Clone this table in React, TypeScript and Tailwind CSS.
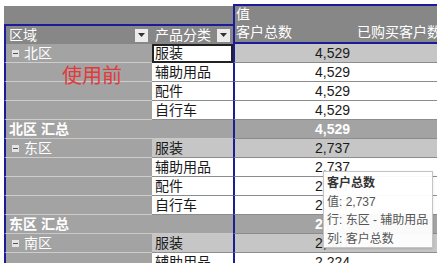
import React from 'react';

const BLUE = 'border-[#1c1c98]';

type RowKind = 'first' | 'sub' | 'total';

interface RowData {
  kind: RowKind;
  region?: string;
  product?: string;
  value: string;
  active?: boolean;
}

const rows: RowData[] = [
  { kind: 'first', region: '北区', product: '服装', value: '4,529', active: true },
  { kind: 'sub', product: '辅助用品', value: '4,529' },
  { kind: 'sub', product: '配件', value: '4,529' },
  { kind: 'sub', product: '自行车', value: '4,529' },
  { kind: 'total', region: '北区 汇总', value: '4,529' },
  { kind: 'first', region: '东区', product: '服装', value: '2,737' },
  { kind: 'sub', product: '辅助用品', value: '2,737' },
  { kind: 'sub', product: '配件', value: '2,737' },
  { kind: 'sub', product: '自行车', value: '2,737' },
  { kind: 'total', region: '东区 汇总', value: '2,737' },
  { kind: 'first', region: '南区', product: '服装', value: '2,331' },
  { kind: 'sub', product: '辅助用品', value: '2,224' },
];

const DropButton: React.FC = () => (
  <span className="w-[13px] h-[13px] bg-[#ececec] flex items-center justify-center">
    <svg width="7" height="4" viewBox="0 0 7 4">
      <path d="M0 0h7L3.5 4z" fill="#333" />
    </svg>
  </span>
);

const Collapse: React.FC = () => (
  <span className="w-[7px] h-[7px] bg-[#e4e4e4] flex items-center justify-center mr-[5px]">
    <span className="w-[5px] h-px bg-[#555]" />
  </span>
);

const PivotRow: React.FC<{ row: RowData }> = ({ row }) => {
  if (row.kind === 'total') {
    return (
      <div className="flex h-[19px] bg-[#a3a3a3] text-white font-bold">
        <div className={`w-[229px] border-l-2 ${BLUE} border-b border-b-[#c9c9c9] pl-[3px] leading-[18px]`}>
          {row.region}
        </div>
        <div className={`w-[119px] border-l-2 ${BLUE} border-b border-b-[#8c8c8c] text-right pr-[2px] leading-[18px]`}>
          {row.value}
        </div>
        <div className="flex-1 border-b border-[#8c8c8c]" />
      </div>
    );
  }
  const light = row.kind === 'first' && !row.active;
  const fill = row.kind === 'first' ? 'bg-[#c6c6c6]' : 'bg-white';
  return (
    <div className="flex h-[19px] text-[#1a1a1a]">
      <div className={`w-[148px] border-l-2 ${BLUE} border-b border-b-[#cdcdcd] bg-[#a3a3a3] text-white flex items-center pl-[6px]`}>
        {row.region && (
          <>
            <Collapse />
            <span className="leading-[18px]">{row.region}</span>
          </>
        )}
      </div>
      {row.active ? (
        <div className="w-[81px] border-2 border-[#222] bg-white pl-[1px] leading-[15px]">{row.product}</div>
      ) : (
        <div className={`w-[81px] border-b border-[#8c8c8c] pl-[3px] leading-[18px] ${light ? 'bg-[#c6c6c6]' : 'bg-white'}`}>
          {row.product}
        </div>
      )}
      <div className={`w-[119px] border-l-2 ${BLUE} border-b border-b-[#8c8c8c] text-right pr-[2px] leading-[18px] ${fill}`}>
        {row.value}
      </div>
      <div className={`flex-1 border-b border-[#8c8c8c] ${fill}`} />
    </div>
  );
};

export default function App() {
  return (
    <div className="relative w-[437px] h-[263px] overflow-hidden bg-white pl-[4px] pt-[4px] text-[14px] font-[Liberation_Sans,Noto_Sans_CJK_SC,sans-serif]">
      {/* header: 值 */}
      <div className="flex h-[20px]">
        <div className="w-[229px] mt-[2px] bg-[#878787]" />
        <div className={`flex-1 border-t-2 border-l-2 ${BLUE} bg-[#878787] text-white pl-[1px] leading-[17px]`}>值</div>
      </div>
      {/* header: field names */}
      <div className="flex h-[20px] text-white">
        <div className={`w-[148px] border-t-2 border-l-2 ${BLUE} bg-[#878787] flex items-center justify-between pl-[3px] pr-[4px]`}>
          <span className="leading-[17px]">区域</span>
          <DropButton />
        </div>
        <div className={`w-[81px] border-t-2 ${BLUE} bg-[#878787] flex items-center justify-between pl-[3px] pr-[3px]`}>
          <span className="leading-[17px]">产品分类</span>
          <DropButton />
        </div>
        <div className={`w-[119px] border-l-2 border-b-2 ${BLUE} bg-[#878787] pl-[1px] leading-[17px]`}>客户总数</div>
        <div className={`flex-1 border-b-2 ${BLUE} bg-[#878787] pl-[5px] leading-[17px] whitespace-nowrap overflow-hidden`}>
          已购买客户数
        </div>
      </div>
      {rows.map((row, i) => (
        <PivotRow key={i} row={row} />
      ))}

      <div className="absolute left-[62px] top-[64px] text-[20px] leading-[24px] text-[#e23a3a]">使用前</div>

      <div className="absolute left-[323px] top-[171px] w-[110px] h-[77px] bg-white/95 border border-[#c4c4c4] shadow-sm pl-[3px] pt-[2px] text-[12px] leading-[18.5px] text-[#555] whitespace-nowrap">
        <div className="font-bold text-[#333]">客户总数</div>
        <div>值: 2,737</div>
        <div>行: 东区 - 辅助用品</div>
        <div>列: 客户总数</div>
      </div>
    </div>
  );
}
